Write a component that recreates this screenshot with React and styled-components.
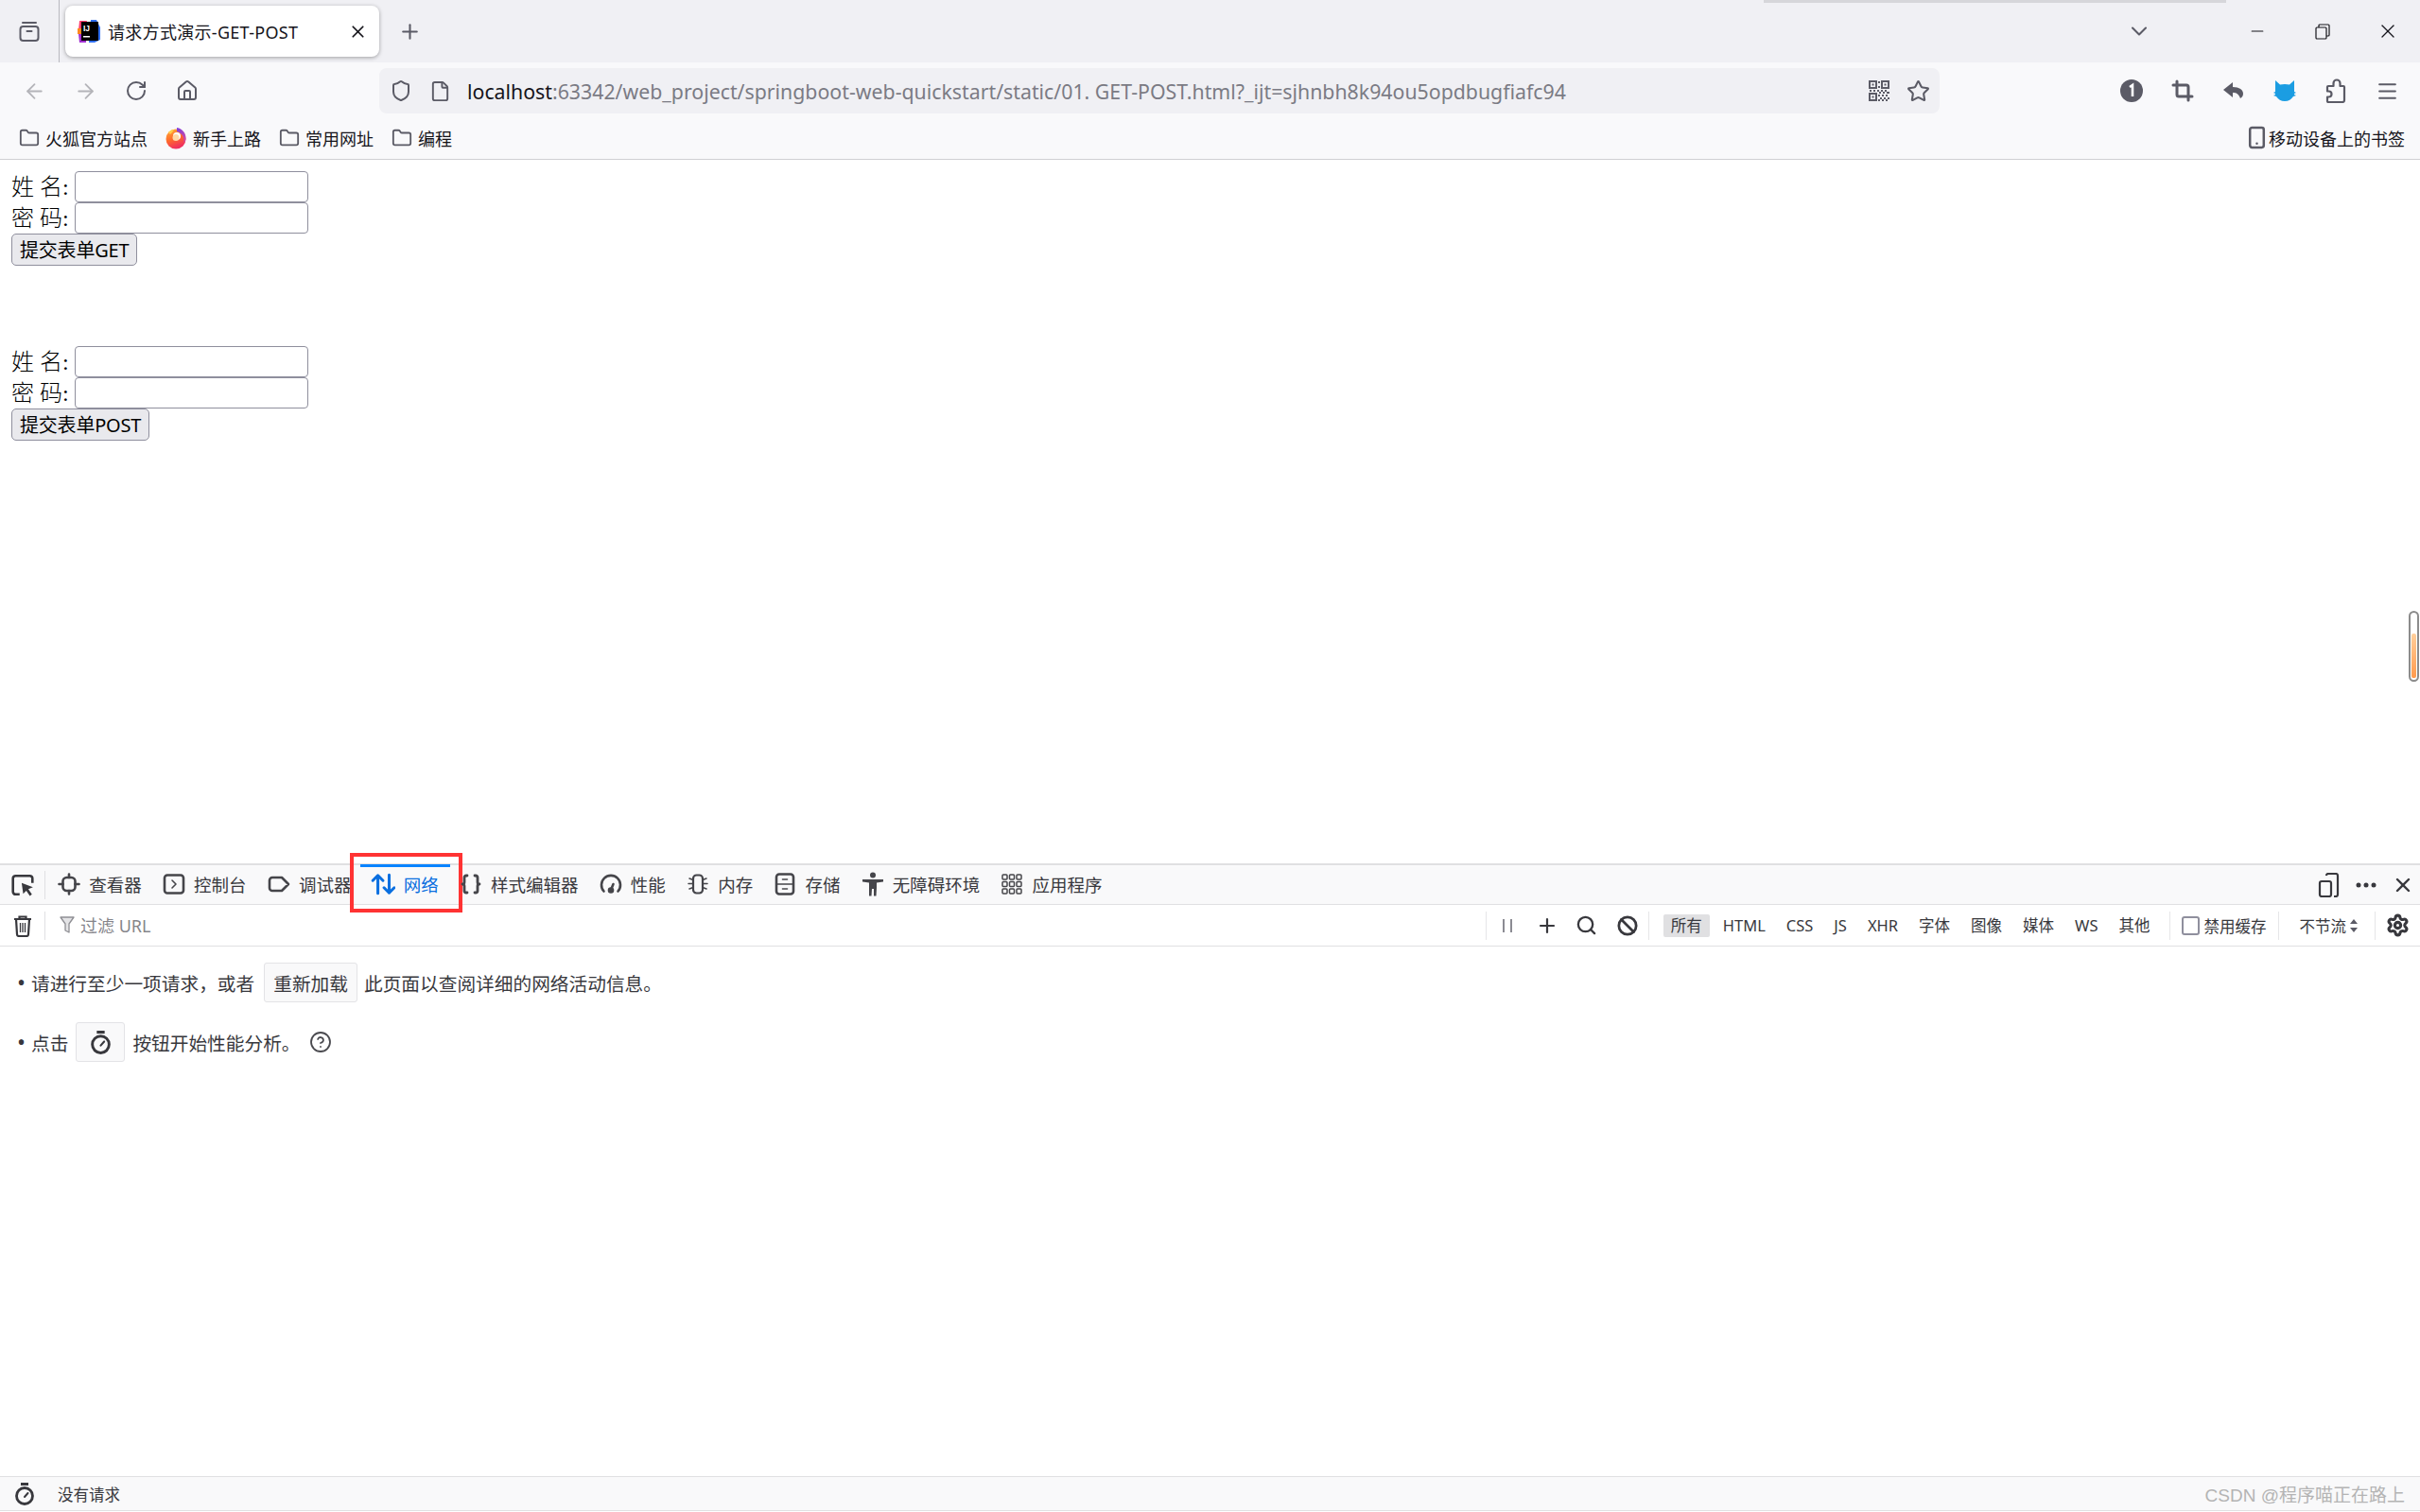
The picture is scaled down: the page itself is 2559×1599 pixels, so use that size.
import React from 'react';
import styled, { createGlobalStyle } from 'styled-components';
import {
  ArrowLeft, ArrowRight, RotateCw, House, Shield, File, Star, Crop, Folder, X, Plus, ChevronDown,
  Minus, Menu, Smartphone, Braces, Search, Ban, Settings, CircleHelp,
} from 'lucide-react';

const cjk = `"Noto Sans", "Noto Sans CJK SC", sans-serif`;

const Global = createGlobalStyle`
  html, body { margin: 0; padding: 0; background: #fff; overflow: hidden; }
  * { box-sizing: border-box; }
`;

const Win = styled.div`
  position: relative;
  width: 2559px;
  height: 1599px;
  display: flex;
  flex-direction: column;
  overflow: hidden;
  font-family: ${cjk};
  color: #15141a;
`;

const TabStrip = styled.div`
  height: 66px;
  background: #f0f0f4;
  display: flex;
  align-items: center;
  position: relative;
`;

const TopShadow = styled.div`
  position: absolute;
  top: 0;
  left: 1865px;
  width: 489px;
  height: 3px;
  background: #d6d6da;
`;

const StripBtn = styled.div`
  width: ${p => p.$w || 54}px;
  height: 54px;
  display: flex;
  align-items: center;
  justify-content: center;
  color: #5b5b66;
  flex: none;
`;

const TabSep = styled.div`
  width: 1px;
  height: 66px;
  background: #b9b9bf;
  margin: 0 6px 0 0;
`;

const BrowserTab = styled.div`
  width: 332px;
  height: 54px;
  background: #fff;
  border-radius: 8px;
  box-shadow: 0 1px 4px rgba(0, 0, 0, 0.35);
  display: flex;
  align-items: center;
  padding: 0 12px 0 13px;
  gap: 8px;
`;

const TabTitle = styled.span`
  font-size: 18px;
  letter-spacing: 0.3px;
  flex: 1;
  white-space: nowrap;
`;

const WinControls = styled.div`
  margin-left: auto;
  display: flex;
  align-items: center;
`;

const WinBtn = styled.div`
  width: 69px;
  display: flex;
  justify-content: center;
  align-items: center;
  color: #15141a;
`;

const NavBar = styled.div`
  height: 57px;
  background: #f9f9fb;
  display: flex;
  align-items: flex-start;
  padding: 6px 8px 0 9px;
`;

const NavBtn = styled.div`
  width: 54px;
  height: 48px;
  display: flex;
  align-items: center;
  justify-content: center;
  color: ${p => (p.$off ? '#b4b4b9' : '#5b5b66')};
  flex: none;
`;

const UrlBox = styled.div`
  width: 1650px;
  height: 48px;
  margin-left: 176px;
  background: #f0f0f4;
  border-radius: 8px;
  display: flex;
  align-items: center;
  padding: 0 10px 0 11px;
  gap: 18px;
  color: #5b5b66;
  svg { flex: none; }
`;

const UrlText = styled.div`
  margin-left: -1px;
  font-size: 21.3px;
  white-space: nowrap;
  color: #7b7b84;
  flex: 1;

  b {
    font-weight: 400;
    color: #15141a;
  }
`;

const NavRight = styled.div`
  margin-left: auto;
  display: flex;
`;

const BookmarkBar = styled.div`
  height: 46px;
  background: #f9f9fb;
  border-bottom: 1px solid #cfcfd3;
  display: flex;
  align-items: center;
  padding: 0 16px 0 20px;
  gap: 19px;
`;

const Bookmark = styled.div`
  display: flex;
  align-items: center;
  gap: ${p => p.$gap ?? 6}px;
  font-size: 18px;
  white-space: nowrap;
  color: #15141a;
  svg { color: #5b5b66; flex: none; }
`;

const PushRight = styled.div`
  margin-left: auto;
`;

const Page = styled.div`
  height: 744px;
  padding: 12px;
  background: #fff;
  position: relative;
  font-family: "Liberation Serif", "Noto Sans CJK SC", serif;
  font-size: 24px;
  color: #000;
`;

const Form = styled.form`
  margin: ${p => (p.$gapTop ? '85px 0 0' : '0')};
`;

const Field = styled.label`
  display: flex;
  align-items: center;
  height: 33px;
  white-space: pre;
`;

const FieldName = styled.span`
  padding-bottom: 5px;
  font-weight: 300;
`;

const TextInput = styled.input`
  width: 247px;
  height: 33px;
  border: 1px solid #8f8f9d;
  border-radius: 4px;
  background: #fff;
  padding: 0 3px;
  margin: 0;
`;

const Submit = styled.button`
  height: 34px;
  margin: 0;
  padding: 2px 8px 0;
  border: 1px solid #8f8f9d;
  border-radius: 5px;
  background: #e9e9ed;
  font-family: ${cjk};
  font-size: 20px;
  letter-spacing: -0.2px;
  color: #000;
  display: block;
  line-height: 30px;
`;

const SideHandle = styled.div`
  position: absolute;
  right: 1px;
  top: 477px;
  width: 11px;
  height: 75px;
  border: 2px solid #8c8c8c;
  border-radius: 6px;
  background: #fff;
  display: flex;
  align-items: flex-end;
  justify-content: center;
  padding-bottom: 2px;

  &::after {
    content: '';
    width: 5px;
    height: 47px;
    border-radius: 2px;
    background: linear-gradient(#ffcf9c, #ff9a4d);
  }
`;

const DevTools = styled.div`
  flex: 1;
  display: flex;
  flex-direction: column;
  border-top: 2px solid #e0e0e2;
  color: #38383d;
`;

const DevTabs = styled.div`
  height: 42px;
  flex: none;
  background: #f9f9fa;
  border-bottom: 1px solid #e0e0e2;
  display: flex;
  align-items: center;
`;

const PickerBtn = styled.div`
  width: 48px;
  height: 30px;
  display: flex;
  align-items: center;
  justify-content: center;
  border-right: 1px solid #e0e0e2;
  margin-right: 3px;
  color: #38383d;
  flex: none;
`;

const DevTab = styled.div`
  position: relative;
  height: 41px;
  padding: 0 12px 2px;
  display: flex;
  align-items: center;
  gap: 11.3px;
  font-size: 18.5px;
  white-space: nowrap;
  color: ${p => (p.$on ? '#0a6fe0' : '#38383d')};
  flex: none;

  &::before {
    content: ${p => (p.$on ? "''" : 'none')};
    position: absolute;
    top: -1px;
    left: -2px;
    right: 0;
    height: 3px;
    background: #0a84ff;
  }
`;

const TabIconBox = styled.span`
  width: 20px;
  height: 24px;
  display: flex;
  align-items: center;
  justify-content: center;
  flex: none;
  color: ${p => (p.$on ? '#0a6fe0' : '#45454a')};
  svg { flex: none; }
`;

const Callout = styled.div`
  position: absolute;
  left: -13px;
  right: -13px;
  top: -13px;
  bottom: -9px;
  border: 4px solid #ff3333;
  pointer-events: none;
`;

const DevTabRight = styled.div`
  margin-left: auto;
  display: flex;
  align-items: center;
  gap: 15px;
  padding-right: 6px;
  color: #38383d;
`;

const FilterRow = styled.div`
  height: 44px;
  flex: none;
  background: #fff;
  border-bottom: 1px solid #e0e0e2;
  display: flex;
  align-items: center;
`;

const RowSep = styled.div`
  width: 1px;
  height: 30px;
  background: #e6e6e8;
  flex: none;
`;

const UrlFilter = styled.div`
  display: flex;
  align-items: center;
  gap: 6px;
  padding: 0 0 2px 12px;
  font-size: 18px;
  color: #85858a;
  flex: 1;
`;

const ToolIcon = styled.div`
  width: ${p => p.$w || 43}px;
  display: flex;
  justify-content: center;
  align-items: center;
  color: #38383d;
  flex: none;
`;

const Chips = styled.div`
  display: flex;
  align-items: center;
  gap: 6px;
  margin-left: 15px;
  margin-right: 12px;
`;

const Chip = styled.div`
  height: 24px;
  padding: 0 8px;
  border-radius: 2px;
  font-size: 16.5px;
  line-height: 23px;
  white-space: nowrap;
  background: ${p => (p.$on ? '#e0e0e2' : 'transparent')};
  color: #38383d;
`;

const CacheCheck = styled.div`
  display: flex;
  align-items: center;
  gap: 5px;
  margin: 0 12px;
  font-size: 16.5px;
  white-space: nowrap;
`;

const Box = styled.span`
  width: 19px;
  height: 20px;
  border: 2px solid #8f8f9d;
  border-radius: 3px;
  background: #fff;
`;

const Throttle = styled.div`
  display: flex;
  align-items: center;
  gap: 3px;
  margin: 0 17px 0 22px;
  font-size: 16.5px;
  white-space: nowrap;
`;

const Hints = styled.ul`
  flex: 1;
  list-style: none;
  margin: 0;
  padding: 17px 0 0 18px;
  display: flex;
  flex-direction: column;
  gap: 21px;
  font-size: 19.7px;
`;

const Hint = styled.li`
  display: flex;
  align-items: center;
  white-space: nowrap;

  &::before {
    content: '•';
    width: 15px;
    flex: none;
    font-size: 24px;
    line-height: 1;
  }
`;

const InlineBtn = styled.span`
  height: 42px;
  min-width: 52px;
  padding: 0 9px;
  margin: 0 ${p => p.$r ?? 8}px 0 ${p => p.$l ?? 8}px;
  border: 1px solid #e3e3e6;
  border-radius: 3px;
  background: #f9f9fa;
  display: flex;
  align-items: center;
  justify-content: center;
`;

const HelpIcon = styled.span`
  display: flex;
  margin-left: 9px;
  color: #4a4a4f;
`;

const StatusBar = styled.div`
  height: 37px;
  flex: none;
  margin-bottom: 1px;
  background: #f9f9fa;
  border-top: 1px solid #e0e0e2;
  border-bottom: 1px solid #e0e0e2;
  display: flex;
  align-items: center;
  padding: 0 16px 0 14px;
  font-size: 16.5px;
  gap: 23px;
`;

const Watermark = styled.div`
  margin-left: auto;
  font-family: "Liberation Sans", "Noto Sans CJK SC", sans-serif;
  font-size: 19px;
  color: #b4b4b4;
  white-space: nowrap;
`;

const Draw = ({ size = 24, children, sw = 2.6 }) => (
  <svg width={size} height={size} viewBox="0 0 24 24" fill="none" stroke="currentColor" strokeWidth={sw} strokeLinecap="round" strokeLinejoin="round">
    {children}
  </svg>
);

const TabManagerIcon = () => (
  <Draw size={24} sw={2}>
    <path d="M5 3h14" />
    <rect x="2.5" y="7" width="19" height="15" rx="3" />
    <path d="M9.5 12h5" />
  </Draw>
);

const IntellijIcon = () => (
  <svg width="24" height="26" viewBox="0 0 24 26">
    <path d="M2 2h8l-3 10H1z" fill="#ff3d6e" />
    <path d="M0 10h5v6H0z" fill="#ff8a1e" />
    <path d="M1 16h8v9H2z" fill="#a12fd0" />
    <path d="M14 1h6l4 8v13l-6 3h-6z" fill="#2f6ff0" />
    <rect x="4" y="3" width="18" height="20" fill="#000" />
    <text x="6" y="13" fontFamily="Liberation Sans, sans-serif" fontWeight="700" fontSize="8.5" fill="#fff">IJ</text>
    <rect x="6" y="18" width="7" height="1.5" fill="#fff" />
  </svg>
);

const RestoreIcon = () => (
  <svg width="16" height="17" viewBox="0 0 16 17" fill="none" stroke="currentColor" strokeWidth="1.2">
    <rect x="1" y="4" width="11" height="12" rx="1" />
    <path d="M4 4V2a1 1 0 0 1 1-1h9a1 1 0 0 1 1 1v10a1 1 0 0 1-1 1h-2" />
  </svg>
);

const QrIcon = () => (
  <svg width="22" height="22" viewBox="0 0 22 22" fill="#5b5b66">
    <path fillRule="evenodd" d="M0 0h9v9H0zM2 2v5h5V2zM13 0h9v9h-9zM15 2v5h5V2zM0 13h9v9H0zM2 15v5h5v-5z" />
    <path d="M3.5 3.5h2v2h-2zM16.5 3.5h2v2h-2zM3.5 16.5h2v2h-2zM10 1h2v2h-2zM10 6h2v2h-2zM1 10h2v2H1zM5 10h2v2H5zM9 10h2v2H9zM13 10h2v2h-2zM17 10h2v2h-2zM11 12h2v2h-2zM15 12h2v2h-2zM19 12h3v2h-3zM10 15h2v2h-2zM14 15h2v2h-2zM18 15h2v2h-2zM12 18h2v2h-2zM16 18h2v2h-2zM20 18h2v2h-2zM10 20h2v2h-2zM14 20h2v2h-2zM18 20h2v2h-2z" />
  </svg>
);

const CountBadge = () => (
  <svg width="24" height="24" viewBox="0 0 24 24">
    <circle cx="12" cy="12" r="12" fill="#5b5b66" />
    <path d="M10 8l3-2v12" fill="none" stroke="#fff" strokeWidth="2.6" />
  </svg>
);

const UndoIcon = () => (
  <svg width="24" height="24" viewBox="0 0 24 24" fill="currentColor">
    <path d="M11 3L1 11l10 8v-5c4 0 6 1 8 6 2-1 3-3 3-5 0-4-4-7-11-7z" />
  </svg>
);

const PuzzleIcon = () => (
  <svg width="24" height="26" viewBox="0 0 24 26" fill="none" stroke="currentColor" strokeWidth="2.2" strokeLinejoin="round">
    <path d="M4 25a1 1 0 0 1-1-1v-4.500h1.500a3 3 0 0 0 0-6H3V9a1 1 0 0 1 1-1h5.500V5a3.500 3.500 0 0 1 7 0v3H20a1 1 0 0 1 1 1v14a2 2 0 0 1-2 2z" />
  </svg>
);

const CatIcon = () => (
  <svg width="24" height="24" viewBox="0 0 24 24" fill="#1b9de2">
    <path d="M2 1l5 4.5c3-.8 7-.8 10 0L22 1v12l2 1-2 1v1l2 1-3 1c-2 3-5 5-9 5s-7-2-9-5l-3-1 2-1v-1l-2-1 2-1z" />
  </svg>
);

const FirefoxIcon = () => (
  <svg width="22" height="24" viewBox="0 0 22 24">
    <defs>
      <linearGradient id="fx" x1="0" y1="0" x2="0.4" y2="1">
        <stop offset="0" stopColor="#ffb13b" />
        <stop offset="0.55" stopColor="#ff6a2b" />
        <stop offset="1" stopColor="#f0305f" />
      </linearGradient>
      <linearGradient id="fxp" x1="0" y1="0" x2="1" y2="1">
        <stop offset="0" stopColor="#7a3fe0" />
        <stop offset="1" stopColor="#d84aa0" />
      </linearGradient>
    </defs>
    <circle cx="11" cy="13" r="10.5" fill="url(#fx)" />
    <path d="M12 1c6 1 10 6 9.5 12-.3 2-1 3-2 4 1-6-2-10-7.500-12z" fill="url(#fxp)" />
    <circle cx="12" cy="10" r="4" fill="#fff" />
    <circle cx="11" cy="11.500" r="3.500" fill="#ffd9a8" />
    <path d="M3 6c2-2 4-3 6-3-1 2-2 3-4 5z" fill="#ffcf4a" />
  </svg>
);

const PickerIcon = () => (
  <svg width="26" height="26" viewBox="0 0 24 24" fill="none" stroke="currentColor" strokeWidth="2.4" strokeLinejoin="round">
    <path d="M9 21H5a2.500 2.500 0 0 1-2.500-2.500v-13A2.500 2.500 0 0 1 5 3h14a2.500 2.500 0 0 1 2.500 2.500V10" />
    <path d="M11 10l11 4-4.500 2 3.500 5-2 1.500-3.500-5-3 3z" fill="currentColor" stroke="none" />
  </svg>
);

const InspectorIcon = () => (
  <Draw>
    <rect x="5.500" y="5" width="13" height="14" rx="4" />
    <path d="M12 1.500V5M12 19v3.500M1.500 12h4M18.500 12h4" />
  </Draw>
);

const ConsoleIcon = () => (
  <Draw>
    <rect x="2" y="2.500" width="20" height="19" rx="3" />
    <path d="M10 8l4 4-4 4" strokeWidth="1.600" />
  </Draw>
);

const DebuggerIcon = () => (
  <Draw>
    <path d="M5 5h10l7 7-7 7H5a3 3 0 0 1-3-3V8a3 3 0 0 1 3-3z" />
  </Draw>
);

const NetworkIcon = () => (
  <Draw size={26} sw={2.800}>
    <path d="M7 21V3.500M2 8.500l5-5 5 5" />
    <path d="M18 3v17.500M13 15.500l5 5 5-5" />
  </Draw>
);

const PerfIcon = () => (
  <Draw>
    <path d="M4.500 19.500A10 10 0 1 1 19.500 19.500" />
    <path d="M12 18l2.500-6" />
    <circle cx="12" cy="18.500" r="2" fill="currentColor" />
  </Draw>
);

const MemoryIcon = () => (
  <Draw sw={2.200}>
    <rect x="7" y="2.500" width="10" height="19" rx="3.500" />
    <path d="M3 6l4 1.500M2 11.500h5M3 17l4-1.500M21 6l-4 1.500M22 11.500h-5M21 17l-4-1.500" strokeWidth="1.500" />
  </Draw>
);

const StorageIcon = () => (
  <Draw>
    <rect x="3" y="1.500" width="18" height="21" rx="3" />
    <path d="M3 12h18M9.500 7h5M9.500 17h5" strokeWidth="1.600" />
  </Draw>
);

const PersonIcon = () => (
  <svg width="24" height="26" viewBox="0 0 24 26" fill="currentColor">
    <circle cx="12" cy="3.500" r="3" />
    <path d="M1 8h22v2.500l-7 1V17l-.5 8.500h-2.500L13 18h-2l-.5 7.500H8L8 17v-5.500l-7-1z" />
  </svg>
);

const AppsIcon = () => (
  <svg width="22" height="22" viewBox="0 0 22 22" fill="none" stroke="currentColor" strokeWidth="1.500">
    {[1, 8.500, 16].map(y => [1, 8.500, 16].map(x => (
      <rect key={`${x}-${y}`} x={x} y={y} width="5" height="5" rx="1" />
    )))}
  </svg>
);

const ResponsiveIcon = () => (
  <svg width="24" height="26" viewBox="0 0 24 26" fill="none" stroke="currentColor" strokeWidth="2.200" strokeLinejoin="round">
    <path d="M9 3a2 2 0 0 1 2-2h8a2 2 0 0 1 2 2v20a2 2 0 0 1-2 2h-2" />
    <rect x="2" y="9" width="12" height="16" rx="2" />
  </svg>
);

const DotsIcon = () => (
  <svg width="24" height="8" viewBox="0 0 24 8" fill="currentColor">
    <circle cx="4" cy="4" r="2.500" />
    <circle cx="12" cy="4" r="2.500" />
    <circle cx="20" cy="4" r="2.500" />
  </svg>
);

const TrashIcon = () => (
  <svg width="20" height="24" viewBox="0 0 20 24" fill="none" stroke="currentColor" strokeWidth="2.200">
    <path d="M1 5h18M6.500 5V2.500h7V5" />
    <path d="M3 5l1 16a2 2 0 0 0 2 2h8a2 2 0 0 0 2-2l1-16" />
    <path d="M7.500 9v10M10 9v10M12.500 9v10" strokeWidth="1.300" />
  </svg>
);

const FunnelIcon = () => (
  <svg width="16" height="18" viewBox="0 0 16 18" fill="none" stroke="#8f8f94" strokeWidth="1.300" strokeLinejoin="round">
    <path d="M1 1h14L10 8v9l-4-2V8z" fill="#e4e4e6" />
  </svg>
);

const PauseIcon = () => (
  <svg width="12" height="16" viewBox="0 0 12 16" fill="none" stroke="#5b5b66" strokeWidth="1.400">
    <path d="M2 1v14M10 1v14" />
  </svg>
);

const StopwatchIcon = ({ size = 24 }) => (
  <svg width={size} height={size} viewBox="0 0 24 24" fill="none" stroke="currentColor" strokeWidth="2.800">
    <path d="M8 1.500h8" strokeWidth="3" />
    <circle cx="12" cy="14" r="8.500" />
    <path d="M12 15l3.500-4" strokeWidth="2" strokeLinecap="round" />
  </svg>
);

const SortArrows = () => (
  <svg width="10" height="16" viewBox="0 0 10 16" fill="#5b5b66">
    <path d="M5 1l4 5H1zM5 15l4-5H1z" />
  </svg>
);

const devTabs = [
  { label: '查看器', icon: <InspectorIcon /> },
  { label: '控制台', icon: <ConsoleIcon /> },
  { label: '调试器', icon: <DebuggerIcon /> },
  { label: '网络', icon: <NetworkIcon />, on: true },
  { label: '样式编辑器', icon: <Braces size={24} strokeWidth={2.800} /> },
  { label: '性能', icon: <PerfIcon /> },
  { label: '内存', icon: <MemoryIcon /> },
  { label: '存储', icon: <StorageIcon /> },
  { label: '无障碍环境', icon: <PersonIcon /> },
  { label: '应用程序', icon: <AppsIcon /> },
];

const chips = ['所有', 'HTML', 'CSS', 'JS', 'XHR', '字体', '图像', '媒体', 'WS', '其他'];

function DemoForm({ method, gapTop }) {
  return (
    <Form $gapTop={gapTop} onSubmit={e => e.preventDefault()}>
      <Field><FieldName>{'姓 名: '}</FieldName><TextInput type="text" /></Field>
      <Field><FieldName>{'密 码: '}</FieldName><TextInput type="password" /></Field>
      <Submit type="submit">提交表单{method}</Submit>
    </Form>
  );
}

export default function App() {
  return (
    <Win>
      <Global />
      <TabStrip>
        <TopShadow />
        <StripBtn $w={62}><TabManagerIcon /></StripBtn>
        <TabSep />
        <BrowserTab>
          <IntellijIcon />
          <TabTitle>请求方式演示-GET-POST</TabTitle>
          <X size={21} strokeWidth={2} />
        </BrowserTab>
        <StripBtn $w={64}><Plus size={25} strokeWidth={2} /></StripBtn>
        <WinControls>
          <StripBtn $w={181}><ChevronDown size={28} strokeWidth={1.8} /></StripBtn>
          <WinBtn><Minus size={20} strokeWidth={1.300} /></WinBtn>
          <WinBtn><RestoreIcon /></WinBtn>
          <WinBtn><X size={24} strokeWidth={1.300} /></WinBtn>
        </WinControls>
      </TabStrip>

      <NavBar>
        <NavBtn $off><ArrowLeft size={25} strokeWidth={1.700} /></NavBtn>
        <NavBtn $off><ArrowRight size={25} strokeWidth={1.700} /></NavBtn>
        <NavBtn><RotateCw size={24} strokeWidth={2} /></NavBtn>
        <NavBtn><House size={24} strokeWidth={2} /></NavBtn>
        <UrlBox>
          <Shield size={24} strokeWidth={2} />
          <File size={23} strokeWidth={2} />
          <UrlText><b>localhost</b>:63342/web_project/springboot-web-quickstart/static/01. GET-POST.html?_ijt=sjhnbh8k94ou5opdbugfiafc94</UrlText>
          <QrIcon />
          <Star size={25} strokeWidth={2} />
        </UrlBox>
        <NavRight>
          <NavBtn><CountBadge /></NavBtn>
          <NavBtn><Crop size={24} strokeWidth={3} /></NavBtn>
          <NavBtn><UndoIcon /></NavBtn>
          <NavBtn><CatIcon /></NavBtn>
          <NavBtn><PuzzleIcon /></NavBtn>
          <NavBtn><Menu size={25} strokeWidth={2} /></NavBtn>
        </NavRight>
      </NavBar>

      <BookmarkBar>
        <Bookmark><Folder size={22} strokeWidth={2} />火狐官方站点</Bookmark>
        <Bookmark $gap={7}><FirefoxIcon />新手上路</Bookmark>
        <Bookmark><Folder size={22} strokeWidth={2} />常用网址</Bookmark>
        <Bookmark><Folder size={22} strokeWidth={2} />编程</Bookmark>
        <PushRight />
        <Bookmark $gap={0}><Smartphone size={25} strokeWidth={2.400} />移动设备上的书签</Bookmark>
      </BookmarkBar>

      <Page>
        <DemoForm method="GET" />
        <DemoForm method="POST" gapTop />
        <SideHandle />
      </Page>

      <DevTools>
        <DevTabs>
          <PickerBtn><PickerIcon /></PickerBtn>
          {devTabs.map(t => (
            <DevTab key={t.label} $on={t.on}>
              <TabIconBox $on={t.on}>{t.icon}</TabIconBox>
              {t.label}
              {t.on && <Callout />}
            </DevTab>
          ))}
          <DevTabRight>
            <ResponsiveIcon />
            <DotsIcon />
            <X size={24} strokeWidth={2.400} />
          </DevTabRight>
        </DevTabs>

        <FilterRow>
          <PickerBtn><TrashIcon /></PickerBtn>
          <UrlFilter><FunnelIcon />过滤 URL</UrlFilter>
          <RowSep />
          <ToolIcon $w={44}><PauseIcon /></ToolIcon>
          <ToolIcon $w={41}><Plus size={24} strokeWidth={2.200} /></ToolIcon>
          <ToolIcon $w={42}><Search size={23} strokeWidth={2.400} /></ToolIcon>
          <ToolIcon $w={44}><Ban size={22} strokeWidth={3} /></ToolIcon>
          <RowSep />
          <Chips>
            {chips.map((c, i) => <Chip key={c} $on={i === 0}>{c}</Chip>)}
          </Chips>
          <RowSep />
          <CacheCheck><Box />禁用缓存</CacheCheck>
          <RowSep />
          <Throttle>不节流<SortArrows /></Throttle>
          <RowSep />
          <ToolIcon $w={47}><Settings size={25} strokeWidth={3} /></ToolIcon>
        </FilterRow>

        <Hints>
          <Hint>
            请进行至少一项请求，或者
            <InlineBtn $l={10} $r={7}>重新加载</InlineBtn>
            此页面以查阅详细的网络活动信息。
          </Hint>
          <Hint>
            点击
            <InlineBtn><StopwatchIcon size={25} /></InlineBtn>
            按钮开始性能分析。
            <HelpIcon><CircleHelp size={24} strokeWidth={1.800} /></HelpIcon>
          </Hint>
        </Hints>

        <StatusBar>
          <StopwatchIcon size={24} />
          没有请求
          <Watermark>CSDN @程序喵正在路上</Watermark>
        </StatusBar>
      </DevTools>
    </Win>
  );
}
